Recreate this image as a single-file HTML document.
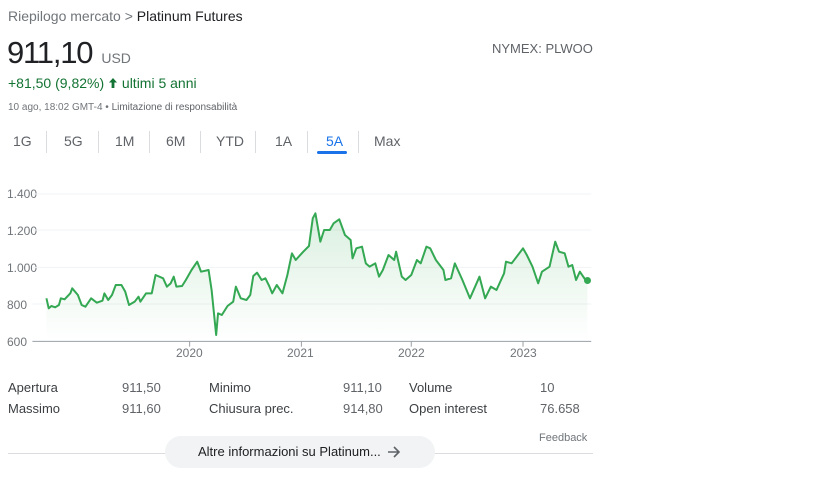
<!DOCTYPE html>
<html><head><meta charset="utf-8"><style>
body{margin:0;width:819px;height:485px;background:#fff;font-family:"Liberation Sans",Arial,sans-serif;position:relative;overflow:hidden}
.a{position:absolute;white-space:nowrap}
.tab{position:absolute;top:133px;font-size:14px;color:#5f6368}
.sep{position:absolute;top:131px;width:1px;height:22px;background:#dadce0}
.st{position:absolute;font-size:13px;color:#3c4043}
.sv{position:absolute;font-size:13px;color:#5f6368}
</style></head><body>
<div class="a" style="left:8px;top:8px;font-size:14px;color:#70757a">Riepilogo mercato &gt; <span style="color:#202124">Platinum Futures</span></div>
<div class="a" style="left:7px;top:35px;color:#202124"><span style="font-size:31px;letter-spacing:-1.2px">911,10</span><span style="font-size:14px;color:#70757a;margin-left:9px">USD</span></div>
<div class="a" style="left:492px;top:41px;font-size:13px;color:#5f6368">NYMEX: PLWOO</div>
<div class="a" style="left:8px;top:75px;font-size:14px;color:#137333">+81,50 (9,82%) <svg width="10" height="12" viewBox="0 0 10 12" style="vertical-align:-1px"><path d="M5 1L1 5.5h2.6V11h2.8V5.5H9z" fill="#137333"/></svg> ultimi 5 anni</div>
<div class="a" style="left:8px;top:102px;font-size:10px;color:#70757a">10 ago, 18:02 GMT-4 • <span style="color:#5f6368">Limitazione di responsabilità</span></div>
<div class="tab" style="left:13px">1G</div>
<div class="sep" style="left:46px"></div>
<div class="tab" style="left:64px">5G</div>
<div class="sep" style="left:98px"></div>
<div class="tab" style="left:115px">1M</div>
<div class="sep" style="left:149px"></div>
<div class="tab" style="left:166px">6M</div>
<div class="sep" style="left:200px"></div>
<div class="tab" style="left:216px">YTD</div>
<div class="sep" style="left:255px"></div>
<div class="tab" style="left:275px">1A</div>
<div class="sep" style="left:307px"></div>
<div class="tab" style="left:326px;color:#1a73e8">5A</div>
<div style="position:absolute;left:317px;top:151px;width:30px;height:3px;background:#1a73e8;border-radius:2px"></div>
<div class="sep" style="left:358px"></div>
<div class="tab" style="left:374px">Max</div>

<div class="a" style="left:7px;top:187px;font-size:12px;color:#70757a">1.400</div>
<div class="a" style="left:7px;top:224px;font-size:12px;color:#70757a">1.200</div>
<div class="a" style="left:7px;top:261px;font-size:12px;color:#70757a">1.000</div>
<div class="a" style="left:7px;top:298px;font-size:12px;color:#70757a">800</div>
<div class="a" style="left:7px;top:335px;font-size:12px;color:#70757a">600</div>
<div class="a" style="left:176px;top:346px;font-size:12px;color:#70757a">2020</div>
<div class="a" style="left:287px;top:346px;font-size:12px;color:#70757a">2021</div>
<div class="a" style="left:398px;top:346px;font-size:12px;color:#70757a">2022</div>
<div class="a" style="left:510px;top:346px;font-size:12px;color:#70757a">2023</div>
<svg style="position:absolute;left:4px;top:180px" width="591" height="170" viewBox="0 0 1560 510" preserveAspectRatio="none">
<defs><linearGradient id="g" x1="0" y1="0" x2="0" y2="1"><stop offset="0" stop-color="#34a853" stop-opacity="0.18"/><stop offset="1" stop-color="#34a853" stop-opacity="0"/></linearGradient></defs>
<g stroke="#f1f3f4" stroke-width="1"><line x1="75" y1="42" x2="1550" y2="42" vector-effect="non-scaling-stroke"/><line x1="75" y1="150" x2="1550" y2="150" vector-effect="non-scaling-stroke"/><line x1="75" y1="262" x2="1550" y2="262" vector-effect="non-scaling-stroke"/><line x1="75" y1="372" x2="1550" y2="372" vector-effect="non-scaling-stroke"/></g>
<line x1="75" y1="484" x2="1550" y2="484" stroke="#9aa0a6" stroke-width="1" vector-effect="non-scaling-stroke"/>
<g stroke="#9aa0a6" stroke-width="1"><line x1="490" y1="484" x2="490" y2="500" vector-effect="non-scaling-stroke"/><line x1="785" y1="484" x2="785" y2="500" vector-effect="non-scaling-stroke"/><line x1="1075" y1="484" x2="1075" y2="500" vector-effect="non-scaling-stroke"/><line x1="1370" y1="484" x2="1370" y2="500" vector-effect="non-scaling-stroke"/></g>
<polygon fill="url(#g)" points="112,355 118,385 125,378 135,382 145,375 150,355 160,358 175,340 180,325 195,345 205,375 215,380 230,355 245,368 260,362 265,340 275,360 285,345 295,315 310,315 320,335 330,375 345,365 355,350 360,365 375,340 390,340 400,285 420,295 430,320 440,310 448,290 455,320 470,318 480,300 495,270 510,245 520,275 540,270 548,330 560,465 565,400 575,405 590,378 605,365 612,320 625,355 640,360 650,345 658,288 668,278 680,300 690,295 700,318 708,340 720,315 735,340 748,285 760,220 770,240 790,215 805,198 815,115 822,100 835,185 845,150 860,150 870,130 885,118 900,165 915,180 920,235 930,205 945,200 955,250 965,260 980,250 990,290 1000,270 1015,225 1030,240 1035,215 1050,290 1060,300 1075,285 1090,240 1100,250 1115,200 1125,205 1140,240 1160,270 1165,300 1180,295 1190,250 1210,300 1230,355 1255,290 1270,355 1285,320 1300,330 1320,280 1325,245 1340,250 1370,205 1380,225 1395,260 1410,310 1420,275 1440,260 1455,185 1465,215 1480,220 1490,260 1500,255 1510,300 1520,275 1535,300 1540,300 1540,484 112,484"/>
<polyline fill="none" stroke="#34a853" stroke-width="2" stroke-linejoin="round" vector-effect="non-scaling-stroke" points="112,355 118,385 125,378 135,382 145,375 150,355 160,358 175,340 180,325 195,345 205,375 215,380 230,355 245,368 260,362 265,340 275,360 285,345 295,315 310,315 320,335 330,375 345,365 355,350 360,365 375,340 390,340 400,285 420,295 430,320 440,310 448,290 455,320 470,318 480,300 495,270 510,245 520,275 540,270 548,330 560,465 565,400 575,405 590,378 605,365 612,320 625,355 640,360 650,345 658,288 668,278 680,300 690,295 700,318 708,340 720,315 735,340 748,285 760,220 770,240 790,215 805,198 815,115 822,100 835,185 845,150 860,150 870,130 885,118 900,165 915,180 920,235 930,205 945,200 955,250 965,260 980,250 990,290 1000,270 1015,225 1030,240 1035,215 1050,290 1060,300 1075,285 1090,240 1100,250 1115,200 1125,205 1140,240 1160,270 1165,300 1180,295 1190,250 1210,300 1230,355 1255,290 1270,355 1285,320 1300,330 1320,280 1325,245 1340,250 1370,205 1380,225 1395,260 1410,310 1420,275 1440,260 1455,185 1465,215 1480,220 1490,260 1500,255 1510,300 1520,275 1535,300 1540,300"/>
</svg>
<div style="position:absolute;left:584px;top:277px;width:7px;height:7px;border-radius:50%;background:#34a853"></div>

<div class="st" style="left:8px;top:380px">Apertura</div><div class="sv" style="left:122px;top:380px">911,50</div>
<div class="st" style="left:209px;top:380px">Minimo</div><div class="sv" style="left:343px;top:380px">911,10</div>
<div class="st" style="left:409px;top:380px">Volume</div><div class="sv" style="left:540px;top:380px">10</div>
<div class="st" style="left:8px;top:401px">Massimo</div><div class="sv" style="left:122px;top:401px">911,60</div>
<div class="st" style="left:209px;top:401px">Chiusura prec.</div><div class="sv" style="left:343px;top:401px">914,80</div>
<div class="st" style="left:409px;top:401px">Open interest</div><div class="sv" style="left:540px;top:401px">76.658</div>
<div class="a" style="left:539px;top:432px;font-size:11px;color:#70757a">Feedback</div>
<div style="position:absolute;left:8px;top:453px;width:585px;height:1px;background:#dadce0"></div>
<div style="position:absolute;left:165px;top:436px;width:270px;height:32px;border-radius:16px;background:#f1f3f4"></div>
<div class="a" style="left:198px;top:444px;font-size:13px;color:#202124">Altre informazioni su Platinum...</div>
<svg style="position:absolute;left:387px;top:445px" width="14" height="14" viewBox="0 0 14 14"><path d="M1 7h11M7 2l5 5-5 5" fill="none" stroke="#5f6368" stroke-width="1.6"/></svg>
</body></html>
